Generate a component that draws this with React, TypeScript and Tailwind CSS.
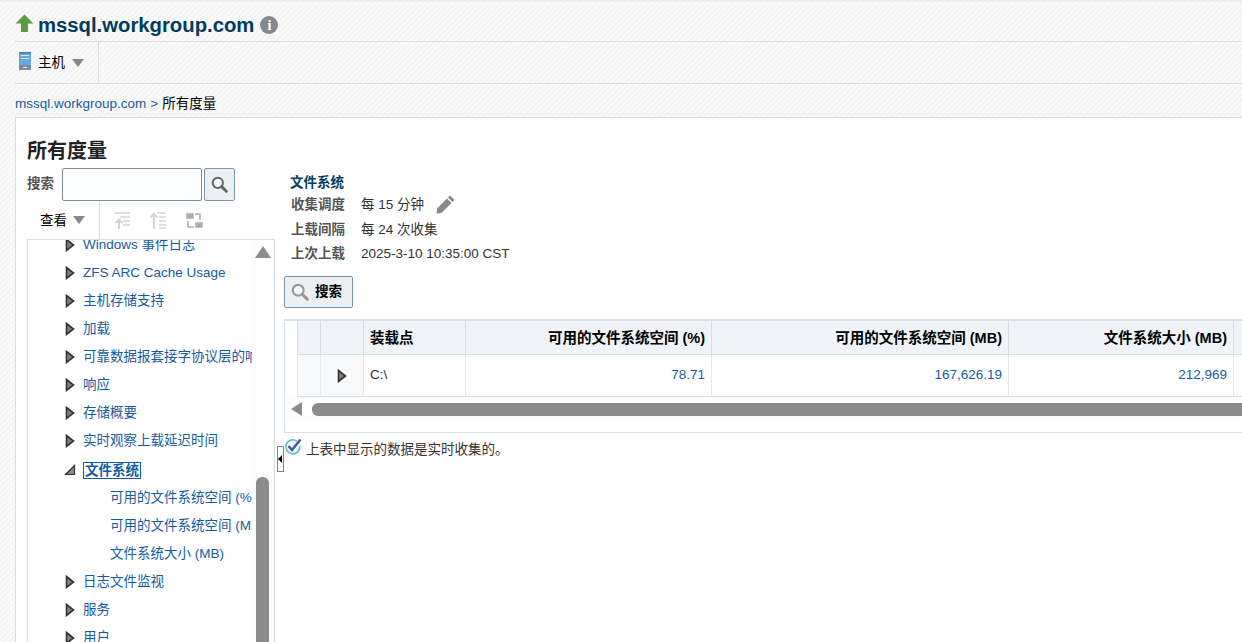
import React from 'react';

const font = "font-['Liberation_Sans','Noto_Sans_CJK_SC',sans-serif]";

const Tri = ({ open }: { open?: boolean }) =>
  open ? (
    <svg width="12" height="12" viewBox="0 0 12 12" className="shrink-0">
      <path d="M10.5 1.5V10.5H1.5Z" fill="#8a8a8a" stroke="#333" strokeWidth="1.2" />
    </svg>
  ) : (
    <svg width="10" height="14" viewBox="0 0 10 14" className="shrink-0">
      <path d="M1.5 1.5L8.5 7L1.5 12.5Z" fill="#808080" stroke="#333" strokeWidth="1.6" />
    </svg>
  );

const TreeRow = ({ label }: { label: string }) => (
  <div className="flex h-[28px] items-center pl-[37px]">
    <Tri />
    <span className="ml-[8px] whitespace-nowrap text-[#145c9e]">{label}</span>
  </div>
);

const SubRow = ({ label }: { label: string }) => (
  <div className="flex h-[28px] items-center pl-[82px]">
    <span className="whitespace-nowrap text-[#145c9e]">{label}</span>
  </div>
);

const MetaRow = ({ label, value, children }: { label: string; value: string; children?: React.ReactNode }) => (
  <div className="flex h-[25px] items-center">
    <span className="mt-[1px] w-[70px] font-bold text-[#555]">{label}</span>
    <span className="mt-[1px] text-[#333]">{value}</span>
    {children}
  </div>
);

const Magnifier = ({ size, color, fill }: { size: number; color: string; fill: string }) => (
  <svg width={size} height={size} viewBox="0 0 20 20">
    <circle cx="8" cy="8" r="6" fill={fill} stroke={color} strokeWidth="2.4" />
    <path d="M12.5 12.5L18 18" stroke={color} strokeWidth="3.4" strokeLinecap="round" />
  </svg>
);

export default function App() {
  return (
    <div className={`${font} relative h-[642px] w-[1242px] overflow-hidden border-t-2 border-[#ececec] bg-[repeating-linear-gradient(135deg,#f9f9f9_0px,#f9f9f9_2px,#f4f4f4_2px,#f4f4f4_4px)] text-[13.5px]`}>
      <div className="pl-[15px]">
        {/* title */}
        <div className="flex h-[40px] items-center border-b border-[#d6dfe6] pt-[7px]">
          <svg width="19" height="19" viewBox="0 0 19 19" className="-mt-[4px]">
            <path d="M9.5 0.5L18.5 9.5H13V18H6V9.5H0.5Z" fill="#5a9a45" />
          </svg>
          <span className="ml-[4px] text-[20.3px] font-bold text-[#003d5b]">mssql.workgroup.com</span>
          <span className="ml-[6px] flex h-[18px] w-[18px] items-center justify-center rounded-full bg-[#85888c] font-['Liberation_Serif',serif] text-[14px] font-bold text-white">i</span>
        </div>

        {/* menu bar */}
        <div className="flex h-[42px] items-center border-b border-[#d6dfe6]">
          <div className="flex h-full w-[84px] items-center border-r border-[#d6dfe6] pl-[4px]">
            <svg width="12" height="18" viewBox="0 0 12 18" className="mb-[3px]">
              <rect x="0" y="0" width="12" height="13" fill="#6aa8dc" />
              <rect x="0" y="0" width="12" height="1.5" fill="#3f7fb8" />
              <rect x="2" y="3" width="8" height="1" fill="#d8e9f7" />
              <rect x="2" y="6" width="8" height="1" fill="#d8e9f7" />
              <rect x="0" y="13" width="12" height="5" fill="#7d8c99" />
              <rect x="4" y="15" width="4" height="1" fill="#dde3e8" />
            </svg>
            <span className="ml-[7px] mt-[2px] text-black">主机</span>
            <span className="ml-[7px] h-0 w-0 border-x-[6px] border-t-[8px] border-x-transparent border-t-[#85888c]" />
          </div>
        </div>

        {/* breadcrumb */}
        <div className="flex h-[33px] items-center pt-[8px]">
          <span className="text-[#145c9e]">mssql.workgroup.com</span>
          <span className="ml-[4px] text-[#145c9e]">&gt;</span>
          <span className="ml-[4px] text-black">所有度量</span>
        </div>

        {/* card */}
        <div className="flex h-[600px] flex-col border-l border-t border-[#d6dfe6] bg-white pl-[11px]">
          <div className="flex h-[50px] items-end pb-[7px] text-[20px] font-bold leading-none text-[#222]">所有度量</div>
          <div className="flex">
            {/* left column */}
            <div className="w-[248px] shrink-0">
              <div className="flex h-[33px] items-center">
                <span className="w-[35px] font-bold text-[#555]">搜索</span>
                <div className="h-[33px] w-[140px] rounded-[2px] border border-[#7a8ea0] bg-[#fbfdff]" />
                <div className="ml-[2px] flex h-[33px] w-[31px] items-center justify-center rounded-[2px] border border-[#7a97ae] bg-[#ecf0f3]">
                  <Magnifier size={17} color="#666" fill="#f3f6f9" />
                </div>
              </div>
              <div className="flex h-[38px] items-center">
                <span className="ml-[13px] mt-[3px] text-black">查看</span>
                <span className="ml-[6px] h-0 w-0 border-x-[6px] border-t-[8px] border-x-transparent border-t-[#85888c]" />
                <div className="ml-[14px] h-full w-px bg-[#d6dfe6]" />
                <svg width="16" height="17" viewBox="0 0 16 17" className="ml-[14px]" fill="none" stroke="#d2d5d7" strokeWidth="1.5">
                  <path d="M0 1H16M6 5H16M9 9H16M9 13H16" />
                  <path d="M5 17V8M1.5 11L5 7.5L8.5 11" strokeWidth="2" />
                </svg>
                <svg width="16" height="17" viewBox="0 0 16 17" className="ml-[20px]" fill="none" stroke="#d2d5d7" strokeWidth="1.5">
                  <path d="M7 1H16M9 5H16M9 9H16M9 13H16M9 16H16" />
                  <path d="M4 17V2M0.5 5.5L4 2L7.5 5.5" strokeWidth="2" />
                </svg>
                <svg width="17" height="17" viewBox="0 0 17 17" className="ml-[20px]" fill="none" stroke="#a9aeb1" strokeWidth="1.5">
                  <rect x="1" y="2" width="6" height="4" fill="#a9aeb1" />
                  <rect x="10" y="11" width="6" height="4" fill="#a9aeb1" />
                  <path d="M9 2H14V8M2 9V15H8" />
                </svg>
              </div>
              {/* tree */}
              <div className="relative h-[403px] overflow-hidden border-x border-t border-[#d6dfe6]">
                <div className="-mt-[9px]">
                  <TreeRow label="Windows 事件日志" />
                  <TreeRow label="ZFS ARC Cache Usage" />
                  <TreeRow label="主机存储支持" />
                  <TreeRow label="加载" />
                  <TreeRow label="可靠数据报套接字协议层的响应时间" />
                  <TreeRow label="响应" />
                  <TreeRow label="存储概要" />
                  <TreeRow label="实时观察上载延迟时间" />
                  <div className="h-px" />
                  <div className="flex h-[28px] items-center pl-[36px]">
                    <Tri open />
                    <span className="ml-[7px] border border-[#145c9e] px-px font-bold leading-[15px] text-[#145c9e]">文件系统</span>
                  </div>
                  <SubRow label="可用的文件系统空间 (%)" />
                  <SubRow label="可用的文件系统空间 (MB)" />
                  <SubRow label="文件系统大小 (MB)" />
                  <TreeRow label="日志文件监视" />
                  <TreeRow label="服务" />
                  <TreeRow label="用户" />
                </div>
                <div className="absolute inset-y-0 right-0 w-[22px] bg-[#fdfdfd]" />
                <div className="absolute right-[3px] top-[6px] h-0 w-0 border-x-[8px] border-b-[12px] border-x-transparent border-b-[#8c8c8c]" />
                <div className="absolute right-[5px] top-[237px] h-[200px] w-[13px] rounded-t-[6px] bg-[#8c8c8c]" />
              </div>
            </div>

            {/* right column */}
            <div className="relative ml-[9px] min-w-0 flex-1">
              <div className="mt-[4px] pl-[6px]">
                <div className="h-[20px] font-bold leading-[22px] text-[#003d5b]">文件系统</div>
                <div className="pl-[1px]">
                  <MetaRow label="收集调度" value="每 15 分钟">
                    <svg width="19" height="19" viewBox="0 0 19 19" className="ml-[12px]">
                      <path d="M14 0.5L18.5 5L16.5 7L12 2.5Z" fill="#8a8a8a" />
                      <path d="M11 3.5L15.5 8L5.5 18L0.5 18.5L1 13.5Z" fill="#8a8a8a" />
                    </svg>
                  </MetaRow>
                  <MetaRow label="上载间隔" value="每 24 次收集" />
                  <div className="-mt-px">
                    <MetaRow label="上次上载" value="2025-3-10 10:35:00 CST" />
                  </div>
                </div>
              </div>
              <div className="mt-[10px] flex h-[32px] w-[69px] items-center rounded-[2px] border border-[#7a97ae] bg-[#ecf0f3] pl-[6px]">
                <Magnifier size={18} color="#9a9a9a" fill="#f6f8fa" />
                <span className="ml-[6px] mt-[1px] font-bold text-black">搜索</span>
              </div>

              {/* table */}
              <div className="mt-[11px] h-[114px] w-[1000px] border border-t-2 border-[#d6dfe6] pl-[12px]">
                <div className="flex h-[34px] border-b border-[#d6dfe6] bg-[#f0f3f7] text-[14.5px] font-bold text-black">
                  <div className="w-[24px] border-x border-[#d6dfe6]" />
                  <div className="w-[43px] border-r border-[#d6dfe6]" />
                  <div className="flex w-[102px] items-center border-r border-[#d6dfe6] pl-[6px] pt-[2px]">装载点</div>
                  <div className="flex w-[246px] items-center justify-end border-r border-[#d6dfe6] pr-[6px] pt-[2px]">可用的文件系统空间 (%)</div>
                  <div className="flex w-[297px] items-center justify-end border-r border-[#d6dfe6] pr-[6px] pt-[2px]">可用的文件系统空间 (MB)</div>
                  <div className="flex w-[225px] items-center justify-end border-r border-[#d6dfe6] pr-[6px] pt-[2px]">文件系统大小 (MB)</div>
                  <div className="flex-1" />
                </div>
                <div className="flex h-[42px] border-b border-[#d6dfe6] text-[#145c9e]">
                  <div className="w-[24px] border-x border-[#e4e9ee] bg-[#f7f9fb]" />
                  <div className="flex w-[43px] items-center justify-center border-r border-[#e4e9ee] bg-[#f7f9fb]">
                    <Tri />
                  </div>
                  <div className="flex w-[102px] items-center border-r border-[#e4e9ee] pl-[6px] text-[#333]">C:\</div>
                  <div className="flex w-[246px] items-center justify-end border-r border-[#e4e9ee] pr-[6px]">78.71</div>
                  <div className="flex w-[297px] items-center justify-end border-r border-[#e4e9ee] pr-[6px]">167,626.19</div>
                  <div className="flex w-[225px] items-center justify-end border-r border-[#e4e9ee] pr-[6px]">212,969</div>
                  <div className="flex-1" />
                </div>
                <div className="-ml-[12px] flex h-[24px] items-center bg-[#fdfdfd] pl-[6px]">
                  <div className="h-0 w-0 border-y-[7px] border-r-[11px] border-y-transparent border-r-[#8c8c8c]" />
                  <div className="ml-[10px] h-[13px] flex-1 rounded-l-[6px] bg-[#8c8c8c]" />
                </div>
              </div>

              <div className="mt-[5px] flex h-[24px] items-center">
                <svg width="18" height="18" viewBox="0 0 18 18" className="-mt-[6px]">
                  <path d="M13 3.2A7 7 0 1 0 15.8 8" fill="#f2f9fc" stroke="#5fb6d6" strokeWidth="1.6" />
                  <path d="M4.5 8L8 12L16.5 1.5" fill="none" stroke="#3f5fa8" strokeWidth="2.6" />
                </svg>
                <span className="ml-[4px] text-[#333]">上表中显示的数据是实时收集的。</span>
              </div>

              {/* splitter */}
              <div className="absolute left-[-7px] top-[278px] flex h-[26px] w-[7px] items-center border border-[#6d87a3] bg-white">
                <span className="h-0 w-0 border-y-[4px] border-r-[4px] border-y-transparent border-r-black" />
              </div>
            </div>
          </div>
        </div>
      </div>
    </div>
  );
}
